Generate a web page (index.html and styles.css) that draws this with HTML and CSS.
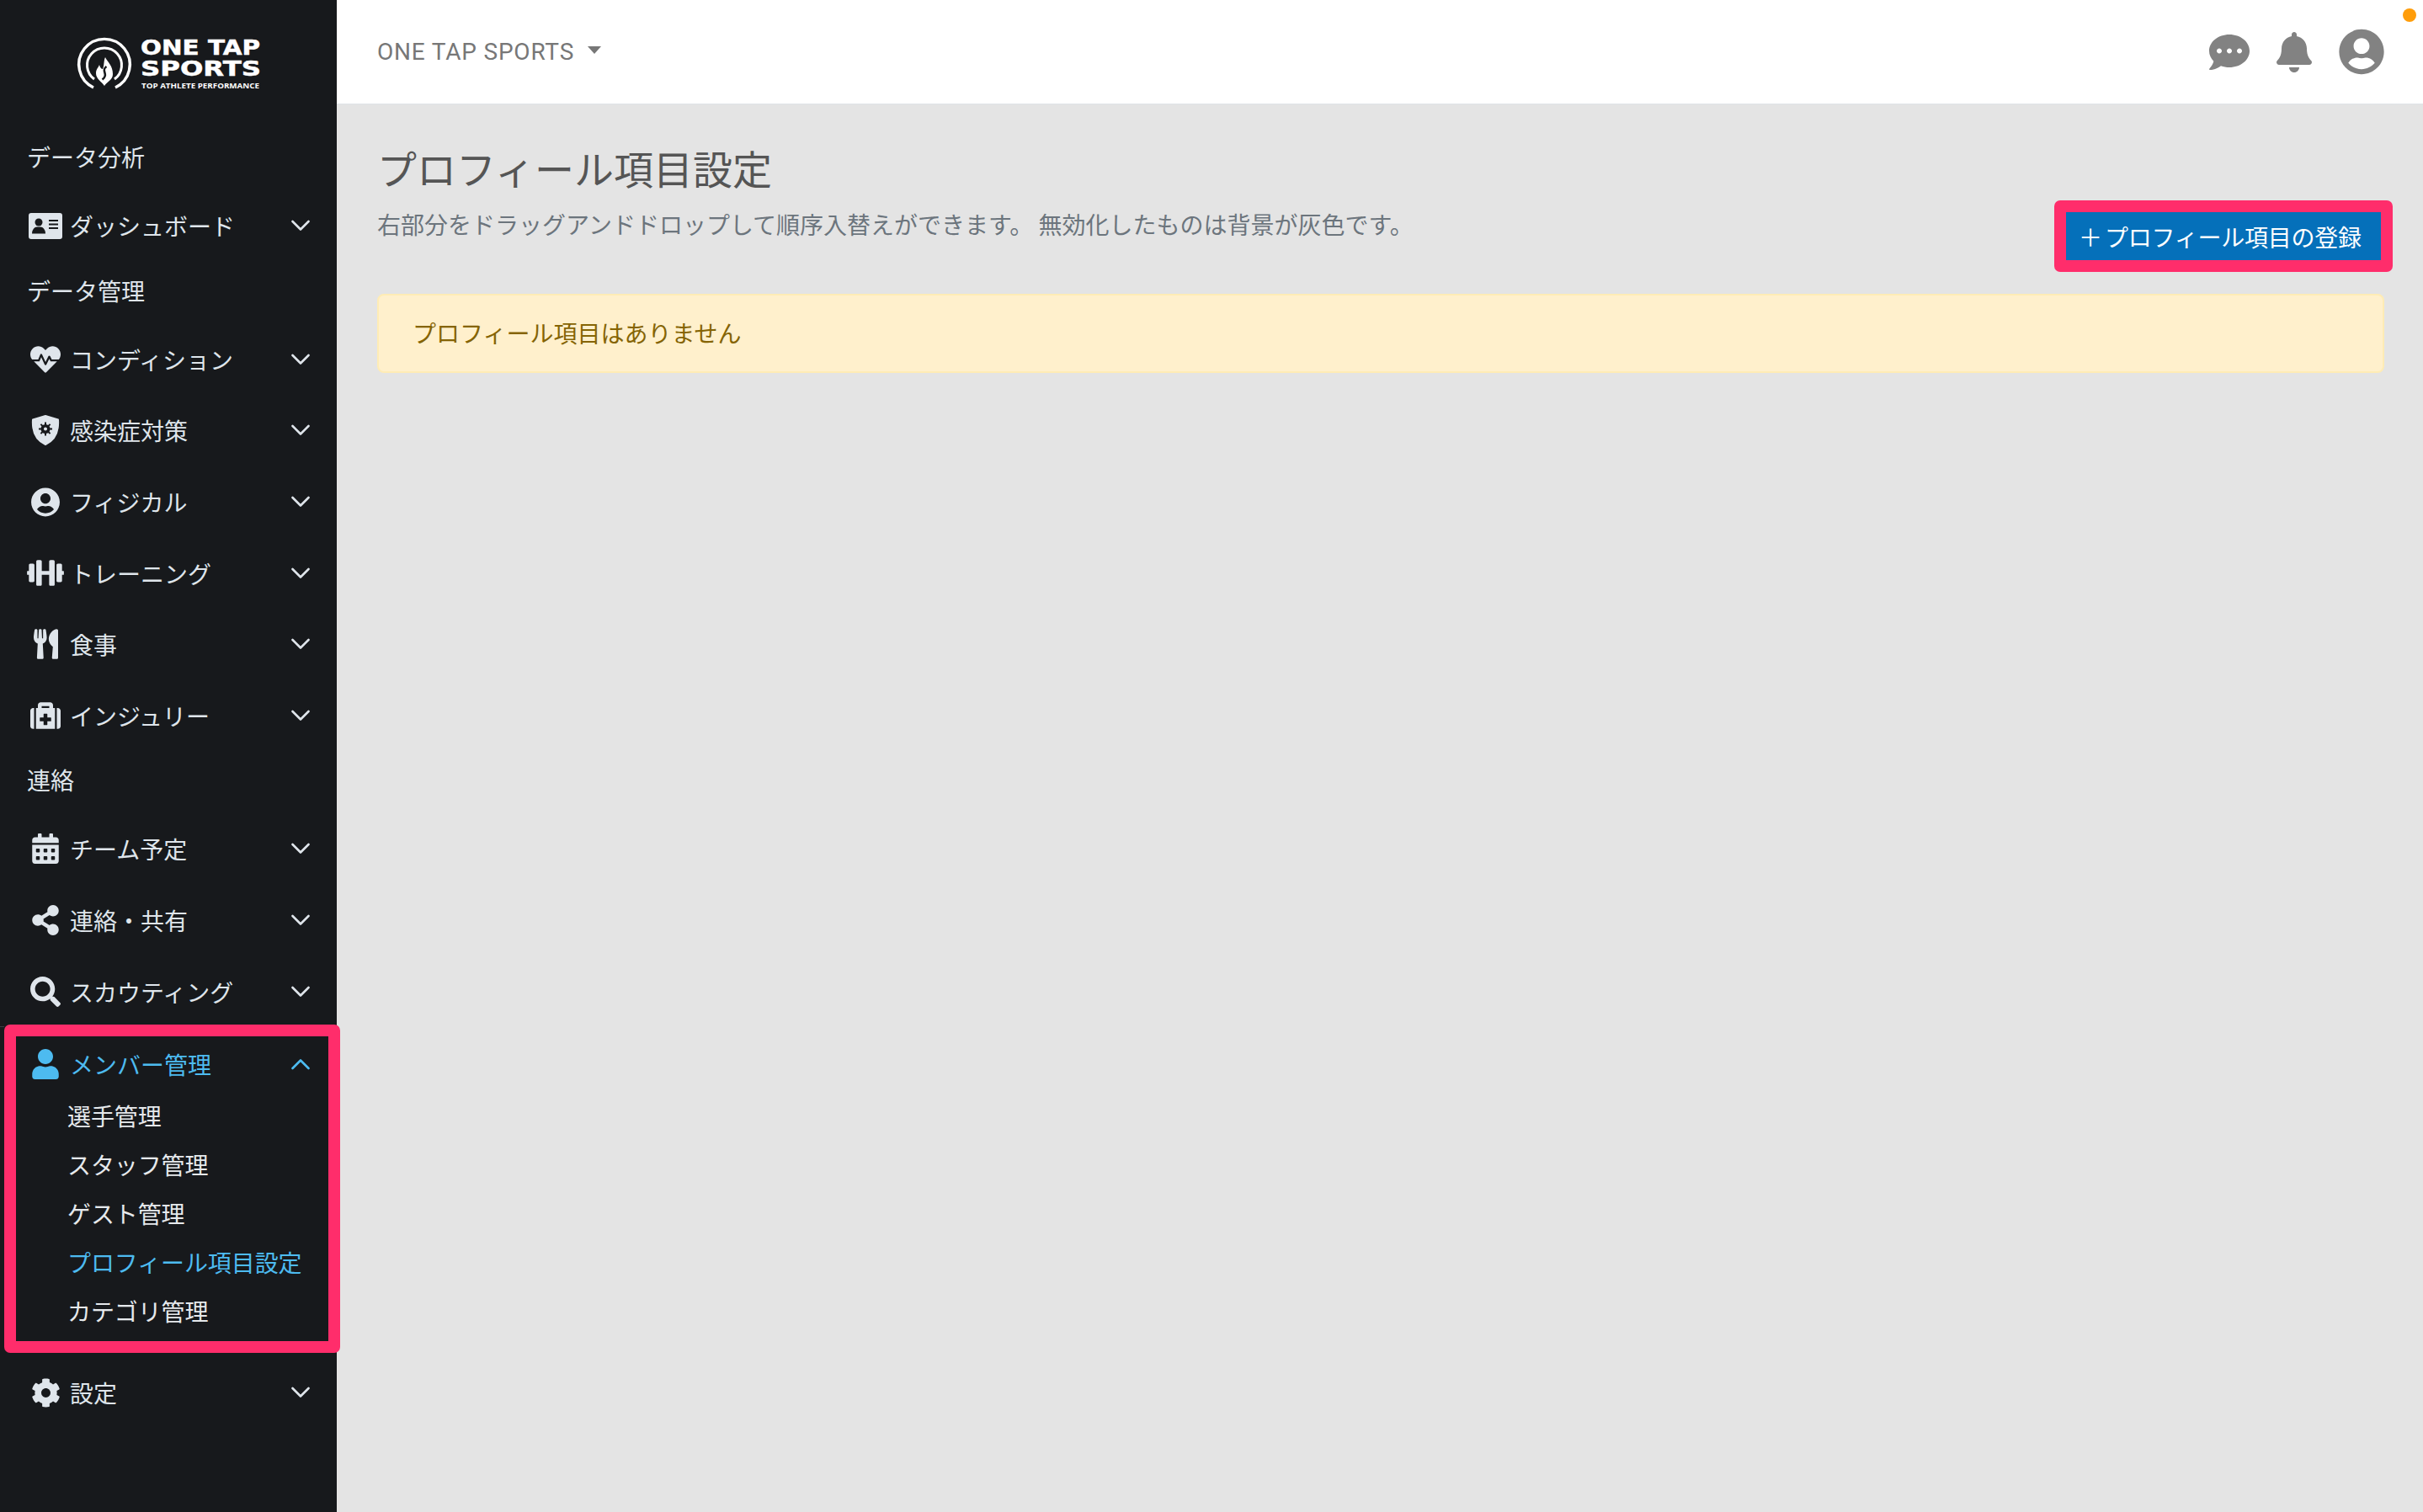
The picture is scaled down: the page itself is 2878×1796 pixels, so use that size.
FILE: index.html
```html
<!DOCTYPE html>
<html lang="ja">
<head>
<meta charset="utf-8">
<title>プロフィール項目設定</title>
<link rel="stylesheet" href="styles.css">
</head>
<body>
<svg class="defs" width="0" height="0" aria-hidden="true">
  <symbol id="i-heart" viewBox="0 0 512 512"><path d="M320.2 243.8l-49.7 99.4c-6 12.1-23.4 11.7-28.9-.6l-56.9-126.3-30 71.7H60.6l182.5 186.5c7.1 7.3 18.6 7.3 25.7 0L451.4 288H342.3l-22.1-44.2zM473.7 73.9l-2.4-2.5c-51.5-52.6-135.8-52.6-187.4 0L256 100l-27.9-28.5c-51.5-52.7-135.9-52.7-187.4 0l-2.4 2.4C-10.4 123.7-12.5 203 31 256h102.4l35.9-86.2c5.4-12.9 23.6-13.2 29.4-.4l58.2 129.3 49-97.9c5.9-11.8 22.7-11.8 28.6 0l27.6 55.2H481c43.5-53 41.4-132.3-7.3-182.1z"/></symbol>
  <symbol id="i-usercircle" viewBox="0 0 496 512"><path d="M248 8C111 8 0 119 0 256s111 248 248 248 248-111 248-248S385 8 248 8zm0 96c48.6 0 88 39.4 88 88s-39.4 88-88 88-88-39.4-88-88 39.4-88 88-88zm0 344c-58.7 0-111.3-26.6-146.5-68.2 18.8-35.4 55.6-59.8 98.5-59.8 2.4 0 4.8.4 7.1 1.1 13 4.2 26.6 6.9 40.9 6.9 14.3 0 28-2.7 40.9-6.9 2.3-.7 4.7-1.1 7.1-1.1 42.9 0 79.7 24.4 98.5 59.8C359.3 421.4 306.7 448 248 448z"/></symbol>
  <symbol id="i-dumbbell" viewBox="0 0 640 512"><path d="M104 96H56c-13.3 0-24 10.7-24 24v104H8c-4.4 0-8 3.6-8 8v48c0 4.4 3.6 8 8 8h24v104c0 13.3 10.7 24 24 24h48c13.3 0 24-10.7 24-24V120c0-13.3-10.7-24-24-24zm528 128h-24V120c0-13.3-10.7-24-24-24h-48c-13.3 0-24 10.7-24 24v272c0 13.3 10.7 24 24 24h48c13.3 0 24-10.7 24-24V288h24c4.4 0 8-3.6 8-8v-48c0-4.4-3.6-8-8-8zM456 32h-48c-13.3 0-24 10.7-24 24v168H256V56c0-13.3-10.7-24-24-24h-48c-13.3 0-24 10.7-24 24v400c0 13.3 10.7 24 24 24h48c13.3 0 24-10.7 24-24V288h128v168c0 13.3 10.7 24 24 24h48c13.3 0 24-10.7 24-24V56c0-13.3-10.7-24-24-24z"/></symbol>
  <symbol id="i-utensils" viewBox="0 0 416 512"><path d="M207.9 15.2c.8 4.7 16.1 94.5 16.1 128.8 0 52.3-27.8 89.6-68.9 104.6L168 486.7c.7 13.7-10.2 25.3-24 25.3H80c-13.7 0-24.7-11.5-24-25.3l12.9-238.1C27.7 233.6 0 196.2 0 144 0 109.6 15.3 19.9 16.1 15.2 19.3-5.1 61.4-5.4 64 16.3v141.2c1.3 3.4 15.1 3.2 16 0 1.4-25.3 7.9-139.2 8-141.8 3.3-20.8 44.7-20.8 47.9 0 .2 2.7 6.6 116.5 8 141.8.9 3.2 14.8 3.4 16 0V16.3c2.6-21.6 44.8-21.4 48-1.1zm119.2 285.7l-15 185.1c-1.2 14 9.9 26 23.9 26h56c13.3 0 24-10.7 24-24V24c0-13.2-10.7-24-24-24-82.5 0-221.4 178.5-64.9 300.9z"/></symbol>
  <symbol id="i-medkit" viewBox="0 0 512 512"><path d="M96 480h320V128h-32V80c0-26.51-21.49-48-48-48H176c-26.51 0-48 21.49-48 48v48H96v352zm96-384h128v32H192V96zm160 248c0 4.42-3.58 8-8 8h-56v56c0 4.42-3.58 8-8 8h-48c-4.42 0-8-3.58-8-8v-56h-56c-4.42 0-8-3.58-8-8v-48c0-4.42 3.58-8 8-8h56v-56c0-4.42 3.58-8 8-8h48c4.42 0 8 3.58 8 8v56h56c4.42 0 8 3.58 8 8v48zM512 176v256c0 26.51-21.49 48-48 48h-16V128h16c26.51 0 48 21.49 48 48zM64 480H48c-26.51 0-48-21.49-48-48V176c0-26.51 21.49-48 48-48h16v352z"/></symbol>
  <symbol id="i-calendar" viewBox="0 0 448 512"><path d="M0 464c0 26.5 21.5 48 48 48h352c26.5 0 48-21.5 48-48V192H0v272zm320-196c0-6.6 5.4-12 12-12h40c6.6 0 12 5.4 12 12v40c0 6.6-5.4 12-12 12h-40c-6.6 0-12-5.4-12-12v-40zm0 128c0-6.6 5.4-12 12-12h40c6.6 0 12 5.4 12 12v40c0 6.6-5.4 12-12 12h-40c-6.6 0-12-5.4-12-12v-40zM192 268c0-6.6 5.4-12 12-12h40c6.6 0 12 5.4 12 12v40c0 6.6-5.4 12-12 12h-40c-6.6 0-12-5.4-12-12v-40zm0 128c0-6.6 5.4-12 12-12h40c6.6 0 12 5.4 12 12v40c0 6.6-5.4 12-12 12h-40c-6.6 0-12-5.4-12-12v-40zM64 268c0-6.6 5.4-12 12-12h40c6.6 0 12 5.4 12 12v40c0 6.6-5.4 12-12 12H76c-6.6 0-12-5.4-12-12v-40zm0 128c0-6.6 5.4-12 12-12h40c6.6 0 12 5.4 12 12v40c0 6.6-5.4 12-12 12H76c-6.6 0-12-5.4-12-12v-40zM400 64h-48V16c0-8.8-7.2-16-16-16h-32c-8.8 0-16 7.2-16 16v48H160V16c0-8.8-7.2-16-16-16h-32c-8.8 0-16 7.2-16 16v48H48C21.5 64 0 85.5 0 112v48h448v-48c0-26.5-21.5-48-48-48z"/></symbol>
  <symbol id="i-share" viewBox="0 0 448 512"><path d="M352 320c-22.608 0-43.387 7.819-59.79 20.895l-102.486-64.054a96.551 96.551 0 0 0 0-41.683l102.486-64.054C308.613 184.181 329.392 192 352 192c53.019 0 96-42.981 96-96S405.019 0 352 0s-96 42.981-96 96c0 7.158.79 14.13 2.276 20.841L155.79 180.895C139.387 167.819 118.608 160 96 160c-53.019 0-96 42.981-96 96s42.981 96 96 96c22.608 0 43.387-7.819 59.79-20.895l102.486 64.054A96.301 96.301 0 0 0 256 416c0 53.019 42.981 96 96 96s96-42.981 96-96-42.981-96-96-96z"/></symbol>
  <symbol id="i-search" viewBox="0 0 512 512"><path d="M505 442.7L405.3 343c-4.5-4.5-10.6-7-17-7H372c27.6-35.3 44-79.7 44-128C416 93.1 322.9 0 208 0S0 93.1 0 208s93.1 208 208 208c48.3 0 92.7-16.4 128-44v16.3c0 6.4 2.5 12.5 7 17l99.7 99.7c9.4 9.4 24.6 9.4 33.9 0l28.3-28.3c9.4-9.4 9.4-24.6.1-34zM208 336c-70.7 0-128-57.2-128-128 0-70.7 57.2-128 128-128 70.7 0 128 57.2 128 128 0 70.7-57.2 128-128 128z"/></symbol>
  <symbol id="i-user" viewBox="0 0 448 512"><path d="M224 256c70.7 0 128-57.3 128-128S294.7 0 224 0 96 57.3 96 128s57.3 128 128 128zm89.6 32h-16.7c-22.2 10.2-46.9 16-72.9 16s-50.6-5.8-72.9-16h-16.7C60.2 288 0 348.2 0 422.4V464c0 26.5 21.5 48 48 48h352c26.5 0 48-21.5 48-48v-41.6c0-74.2-60.2-134.4-134.4-134.4z"/></symbol>
  <symbol id="i-cog" viewBox="0 0 512 512"><path d="M487.4 315.7l-42.6-24.6c4.3-23.2 4.3-47 0-70.2l42.6-24.6c4.9-2.8 7.1-8.6 5.5-14-11.1-35.6-30-67.8-54.7-94.6-3.8-4.1-10-5.1-14.8-2.3L380.8 110c-17.9-15.4-38.5-27.3-60.8-35.1V25.8c0-5.6-3.9-10.5-9.4-11.7-36.7-8.2-74.3-7.8-109.2 0-5.5 1.2-9.4 6.1-9.4 11.7V75c-22.2 7.9-42.8 19.8-60.8 35.1L88.7 85.5c-4.9-2.8-11-1.9-14.8 2.3-24.7 26.7-43.6 58.9-54.7 94.6-1.7 5.4.6 11.2 5.5 14L67.3 221c-4.3 23.2-4.3 47 0 70.2l-42.6 24.6c-4.9 2.8-7.1 8.6-5.5 14 11.1 35.6 30 67.8 54.7 94.6 3.8 4.1 10 5.1 14.8 2.3l42.6-24.6c17.9 15.4 38.5 27.3 60.8 35.1v49.2c0 5.6 3.9 10.5 9.4 11.7 36.7 8.2 74.3 7.8 109.2 0 5.5-1.2 9.4-6.1 9.4-11.7v-49.2c22.2-7.9 42.8-19.8 60.8-35.1l42.6 24.6c4.9 2.8 11 1.9 14.8-2.3 24.7-26.7 43.6-58.9 54.7-94.6 1.5-5.5-.7-11.3-5.6-14.1zM256 336c-44.1 0-80-35.9-80-80s35.9-80 80-80 80 35.9 80 80-35.9 80-80 80z"/></symbol>
  <symbol id="i-bell" viewBox="0 0 448 512"><path d="M224 512c35.32 0 63.97-28.65 63.97-64H160.03c0 35.35 28.65 64 63.97 64zm215.39-149.71c-19.32-20.76-55.47-51.99-55.47-154.29 0-77.7-54.48-139.9-127.94-155.16V32c0-17.67-14.32-32-31.98-32s-31.98 14.33-31.98 32v20.84C118.56 68.1 64.08 130.3 64.08 208c0 102.3-36.15 133.53-55.47 154.29-6 6.45-8.66 14.16-8.61 21.71.11 16.4 12.98 32 32.1 32h383.8c19.12 0 32-15.6 32.1-32 .05-7.55-2.61-15.27-8.61-21.71z"/></symbol>
  <symbol id="i-chat" viewBox="0 0 512 512"><path d="M256 32C114.6 32 0 125.1 0 240c0 49.6 21.4 95 57 130.7C44.5 421.1 2.7 466 2.2 466.5c-2.2 2.3-2.8 5.7-1.5 8.7S4.8 480 8 480c66.3 0 116-31.8 140.6-51.4 32.7 12.3 69 19.4 107.4 19.4 141.4 0 256-93.1 256-208S397.4 32 256 32zM128 272c-17.7 0-32-14.3-32-32s14.3-32 32-32 32 14.3 32 32-14.3 32-32 32zm128 0c-17.7 0-32-14.3-32-32s14.3-32 32-32 32 14.3 32 32-14.3 32-32 32zm128 0c-17.7 0-32-14.3-32-32s14.3-32 32-32 32 14.3 32 32-14.3 32-32 32z"/></symbol>
  <symbol id="i-down" viewBox="0 0 22 14"><path d="M1.5 2 L11 11.5 L20.5 2" fill="none" stroke="currentColor" stroke-width="2.6" stroke-linecap="round" stroke-linejoin="round"/></symbol>
  <symbol id="i-up" viewBox="0 0 22 14"><path d="M1.5 12 L11 2.5 L20.5 12" fill="none" stroke="currentColor" stroke-width="2.6" stroke-linecap="round" stroke-linejoin="round"/></symbol>
</svg>

<div class="app">
  <aside class="sidebar">
    <div class="logo">
      <svg class="logo-svg" width="222" height="66" viewBox="0 0 222 66">
        <path d="M19 60A30.3 30.3 0 1 1 45 60" fill="none" stroke="#fff" stroke-width="3.4"/>
        <path d="M20 50A20.5 20.5 0 1 1 44 50" fill="none" stroke="#fff" stroke-width="3"/>
        <path d="M33 24C36 30 42 34 42 44C42 51 35 53 32 58C29 53 22 50 22 43C22 38 25 36 26 33C27 37 29 38 30 38C32 34 31 28 33 24Z" fill="#fff"/>
        <path d="M34.500 35C27 40 38 44 29.500 50.500" fill="none" stroke="#17191c" stroke-width="2.600"/>
        <text class="logo-big" x="75" y="21" textLength="142" lengthAdjust="spacingAndGlyphs">ONE TAP</text>
        <text class="logo-big" x="75" y="46" textLength="143" lengthAdjust="spacingAndGlyphs">SPORTS</text>
        <text class="logo-small" x="76" y="60.500" textLength="140" lengthAdjust="spacingAndGlyphs">TOP ATHLETE PERFORMANCE</text>
      </svg>
    </div>

    <nav class="nav">
      <div class="nav-label">データ分析</div>
      <div class="nav-item">
        <span class="nav-icon"><svg width="40" height="31" viewBox="0 0 40 31"><rect width="40" height="31" rx="3" fill="currentColor"/><circle cx="12" cy="11" r="4.500" fill="#17191c"/><path d="M4 24.500c0-4.500 3-8 6-8h4c3 0 6 3.500 6 8z" fill="#17191c"/><path d="M24 9h11M24 13.500h11M24 18h11" stroke="#17191c" stroke-width="1.800"/></svg></span>
        <span class="nav-text">ダッシュボード</span>
        <svg class="chev" width="22" height="14"><use href="#i-down"/></svg>
      </div>
      <div class="nav-label">データ管理</div>
      <div class="nav-item">
        <span class="nav-icon"><svg width="36" height="36"><use href="#i-heart"/></svg></span>
        <span class="nav-text">コンディション</span>
        <svg class="chev" width="22" height="14"><use href="#i-down"/></svg>
      </div>
      <div class="nav-item">
        <span class="nav-icon"><svg width="34" height="36" viewBox="0 0 34 36"><path d="M17 1L32 5.500C33 20 28 30 17 35C6 30 1 20 2 5.500Z" fill="currentColor" stroke="currentColor" stroke-width="2" stroke-linejoin="round"/><circle cx="17" cy="16.500" r="5.500" fill="#17191c"/><path d="M17 8.500v16M9 16.500h16M11.400 10.900l11.200 11.200M22.600 10.900L11.400 22.100" stroke="#17191c" stroke-width="2"/><circle cx="17" cy="16.500" r="2" fill="currentColor"/></svg></span>
        <span class="nav-text">感染症対策</span>
        <svg class="chev" width="22" height="14"><use href="#i-down"/></svg>
      </div>
      <div class="nav-item">
        <span class="nav-icon"><svg width="34" height="35"><use href="#i-usercircle"/></svg></span>
        <span class="nav-text">フィジカル</span>
        <svg class="chev" width="22" height="14"><use href="#i-down"/></svg>
      </div>
      <div class="nav-item">
        <span class="nav-icon"><svg width="44" height="35"><use href="#i-dumbbell"/></svg></span>
        <span class="nav-text">トレーニング</span>
        <svg class="chev" width="22" height="14"><use href="#i-down"/></svg>
      </div>
      <div class="nav-item">
        <span class="nav-icon"><svg width="29" height="36"><use href="#i-utensils"/></svg></span>
        <span class="nav-text">食事</span>
        <svg class="chev" width="22" height="14"><use href="#i-down"/></svg>
      </div>
      <div class="nav-item">
        <span class="nav-icon"><svg width="36" height="36"><use href="#i-medkit"/></svg></span>
        <span class="nav-text">インジュリー</span>
        <svg class="chev" width="22" height="14"><use href="#i-down"/></svg>
      </div>
      <div class="nav-label">連絡</div>
      <div class="nav-item">
        <span class="nav-icon"><svg width="32" height="36"><use href="#i-calendar"/></svg></span>
        <span class="nav-text">チーム予定</span>
        <svg class="chev" width="22" height="14"><use href="#i-down"/></svg>
      </div>
      <div class="nav-item">
        <span class="nav-icon"><svg width="32" height="36"><use href="#i-share"/></svg></span>
        <span class="nav-text">連絡・共有</span>
        <svg class="chev" width="22" height="14"><use href="#i-down"/></svg>
      </div>
      <div class="nav-item">
        <span class="nav-icon"><svg width="36" height="36"><use href="#i-search"/></svg></span>
        <span class="nav-text">スカウティング</span>
        <svg class="chev" width="22" height="14"><use href="#i-down"/></svg>
      </div>

      <div class="nav-group">
        <div class="nav-item nav-item-open">
          <span class="nav-icon"><svg width="32" height="36"><use href="#i-user"/></svg></span>
          <span class="nav-text">メンバー管理</span>
          <svg class="chev" width="22" height="14"><use href="#i-up"/></svg>
        </div>
        <div class="sub-item">選手管理</div>
        <div class="sub-item">スタッフ管理</div>
        <div class="sub-item">ゲスト管理</div>
        <div class="sub-item sub-item-active">プロフィール項目設定</div>
        <div class="sub-item">カテゴリ管理</div>
      </div>

      <div class="nav-item">
        <span class="nav-icon"><svg width="35" height="35"><use href="#i-cog"/></svg></span>
        <span class="nav-text">設定</span>
        <svg class="chev" width="22" height="14"><use href="#i-down"/></svg>
      </div>
    </nav>
  </aside>

  <div class="main">
    <header class="topbar">
      <div class="team">ONE TAP SPORTS<span class="caret"></span></div>
      <div class="top-icons">
        <svg width="48" height="48"><use href="#i-chat"/></svg>
        <svg width="42" height="48"><use href="#i-bell"/></svg>
        <svg width="54" height="55"><use href="#i-usercircle"/></svg>
      </div>
      <span class="dot"></span>
    </header>

    <main class="content">
      <div class="head-row">
        <div class="head-text">
          <h1 class="title">プロフィール項目設定</h1>
          <p class="subtitle">右部分をドラッグアンドドロップして順序入替えができます。 無効化したものは背景が灰色です。</p>
        </div>
        <button class="add-btn" type="button"><span class="plus">＋</span>プロフィール項目の登録</button>
      </div>
      <div class="alert">プロフィール項目はありません</div>
    </main>
  </div>
</div>
</body>
</html>
```

FILE: styles.css
```css
*, *::before, *::after { box-sizing: border-box; }

html, body {
  margin: 0;
  padding: 0;
  height: 100%;
}

body {
  font-family: "Noto Sans CJK JP", "Noto Sans", sans-serif;
  font-size: 28px;
  line-height: 42px;
  background: #e4e4e4;
  color: #555;
}

.defs { position: absolute; }

.app {
  display: flex;
  min-height: 1796px;
}

/* Sidebar */
.sidebar {
  width: 400px;
  flex: none;
  background: #17191c;
  color: #dfe5eb;
  position: relative;
  z-index: 2;
}

.logo {
  height: 152px;
  padding: 44px 0 0 92px;
}

.logo-svg { display: block; overflow: visible; }

.logo-big {
  font-family: "DejaVu Sans", sans-serif;
  font-weight: 700;
  font-size: 24.500px;
  fill: #fff;
  stroke: #fff;
  stroke-width: 0.5px;
}

.logo-small {
  font-family: "Open Sans", sans-serif;
  font-weight: 700;
  font-size: 9.500px;
  fill: #fff;
}

.nav-label {
  height: 74px;
  padding: 0 0 6px 32px;
  display: flex;
  align-items: center;
}

.nav-item {
  height: 84.600px;
  padding: 0 32px 0 32px;
  display: flex;
  align-items: center;
}

.nav-icon {
  width: 44px;
  flex: none;
  display: flex;
  justify-content: center;
  margin-right: 7px;
}

.nav-icon svg { display: block; fill: currentColor; }

.nav-text { flex: 1; }

.chev { flex: none; display: block; }

.nav-group {
  position: relative;
  margin-bottom: 26px;
}

.nav-group::before {
  content: "";
  position: absolute;
  left: 0;
  top: -1px;
  width: 5px;
  height: 1px;
  background: #3a3c40;
}

.nav-group::after {
  content: "";
  position: absolute;
  left: 5px;
  top: -3px;
  width: 399px;
  height: 390px;
  border: 14px solid #ff2d6b;
  border-radius: 7px;
  pointer-events: none;
}

.nav-item-open {
  height: 76px;
  padding-top: 12px;
  color: #4dbbf0;
}

.sub-item {
  height: 58px;
  padding-left: 80px;
  display: flex;
  align-items: center;
  letter-spacing: -0.1px;
  color: #e6e9ec;
}

.sub-item-active { color: #4dbbf0; }

/* Main */
.main {
  flex: 1;
  min-width: 0;
  display: flex;
  flex-direction: column;
}

.topbar {
  height: 124px;
  background: #fff;
  border-bottom: 1px solid #dfe3e7;
  padding: 0 46px 0 48px;
  display: flex;
  align-items: center;
  justify-content: space-between;
  position: relative;
}

.team {
  font-family: Roboto, "Noto Sans CJK JP", sans-serif;
  letter-spacing: 0.8px;
  color: #777;
  display: flex;
  align-items: center;
}

.caret {
  width: 0;
  height: 0;
  margin-left: 16px;
  margin-top: -4px;
  border-left: 8px solid transparent;
  border-right: 8px solid transparent;
  border-top: 9px solid #777;
}

.top-icons {
  display: flex;
  align-items: center;
  gap: 32px;
  fill: #828282;
}

.top-icons svg { display: block; }

.dot {
  position: absolute;
  top: 10px;
  right: 8px;
  width: 16px;
  height: 16px;
  border-radius: 50%;
  background: #ff9d0a;
}

.content {
  padding: 42px 46px 0 48px;
}

.head-row {
  display: flex;
  justify-content: space-between;
  align-items: flex-end;
}

.title {
  margin: 0 0 13px;
  font-size: 47px;
  line-height: 66px;
  font-weight: 400;
  color: #555;
}

.subtitle {
  margin: 0 0 22px;
  color: #6c757d;
}

.add-btn {
  position: relative;
  flex: none;
  width: 374px;
  height: 57px;
  margin-right: 4px;
  padding: 0 0 0 12px;
  border: 0;
  border-radius: 0;
  background: #0570ba;
  color: #fff;
  font: inherit;
  letter-spacing: -0.25px;
  display: flex;
  align-items: center;
}

.add-btn::after {
  content: "";
  position: absolute;
  inset: -14px;
  border: 14px solid #ff2d6b;
  border-radius: 7px;
}

.plus {
  width: 34px;
  flex: none;
}

.alert {
  margin-top: 40px;
  height: 94px;
  padding: 0 40px 3px;
  display: flex;
  align-items: center;
  background: #fff0cc;
  border: 2px solid #ffecb5;
  border-radius: 8px;
  color: #856404;
}
```
